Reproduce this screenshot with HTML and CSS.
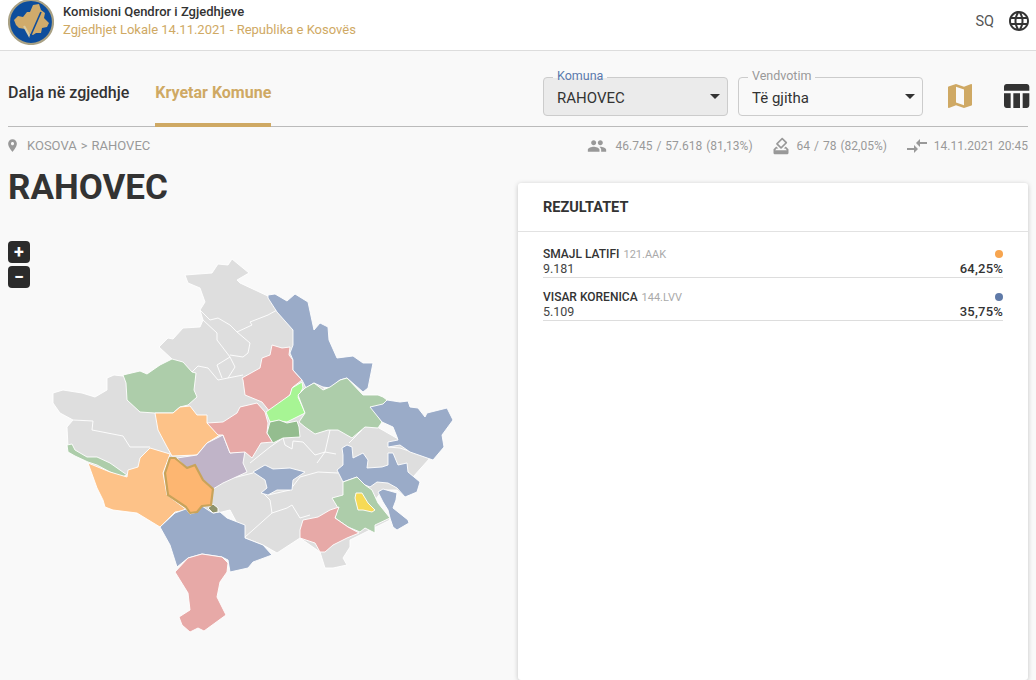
FILE: index.html
```html
<!DOCTYPE html>
<html lang="sq">
<head>
<meta charset="utf-8">
<title>Rahovec</title>
<link rel="stylesheet" href="styles.css">
</head>
<body>
<header class="topbar">
  <div class="brand">
    <svg class="logo" viewBox="0 0 46 46" aria-hidden="true">
      <circle cx="23" cy="23" r="22" fill="#0d4d9c" stroke="#a9a184" stroke-width="2.2"/>
      <path class="logo-land" d="M6 21 10 17 15 18 19 13 22 13 25 6 31 5 33 11 37 14 36 19 41 24 39 28 34 29 33 34 28 34 25 36 22 35 20 34 17 30 11 29 8 26Z"/>
      <path class="logo-tail" d="M16 27 22 38"/>
      <path class="logo-check" d="M22 38 33 13"/>
    </svg>
    <div class="brand-text">
      <div class="brand-title">Komisioni Qendror i Zgjedhjeve</div>
      <div class="brand-sub">Zgjedhjet Lokale 14.11.2021 - Republika e Kosovës</div>
    </div>
  </div>
  <div class="lang">
    <span>SQ</span>
    <svg class="globe" viewBox="0 0 24 24" aria-hidden="true"><path d="M11.99 2C6.47 2 2 6.48 2 12s4.47 10 9.99 10C17.52 22 22 17.52 22 12S17.52 2 11.99 2zm6.93 6h-2.95c-.32-1.25-.78-2.45-1.38-3.56 1.84.63 3.37 1.91 4.33 3.56zM12 4.04c.83 1.2 1.48 2.53 1.91 3.96h-3.82c.43-1.43 1.08-2.76 1.91-3.96zM4.26 14C4.1 13.36 4 12.69 4 12s.1-1.36.26-2h3.38c-.08.66-.14 1.32-.14 2 0 .68.06 1.34.14 2H4.26zm.82 2h2.95c.32 1.25.78 2.45 1.38 3.56-1.84-.63-3.37-1.9-4.33-3.56zm2.95-8H5.08c.96-1.66 2.49-2.93 4.33-3.56C8.81 5.55 8.35 6.75 8.03 8zM12 19.96c-.83-1.2-1.48-2.53-1.91-3.96h3.82c-.43 1.43-1.08 2.76-1.91 3.96zM14.34 14H9.66c-.09-.66-.16-1.32-.16-2 0-.68.07-1.35.16-2h4.68c.09.65.16 1.32.16 2 0 .68-.07 1.34-.16 2zm.25 5.56c.6-1.11 1.06-2.31 1.38-3.56h2.95c-.96 1.65-2.49 2.93-4.33 3.56zM16.36 14c.08-.66.14-1.32.14-2 0-.68-.06-1.34-.14-2h3.38c.16.64.26 1.31.26 2s-.1 1.36-.26 2h-3.38z"/></svg>
  </div>
</header>

<div class="page">
  <nav class="tabbar">
    <div class="tabs">
      <a class="tab">Dalja në zgjedhje</a>
      <a class="tab tab-active">Kryetar Komune</a>
    </div>
    <div class="controls">
      <div class="select select-filled">
        <span class="select-label label-blue">Komuna</span>
        <span class="select-value">RAHOVEC</span>
        <span class="caret"></span>
      </div>
      <div class="select">
        <span class="select-label">Vendvotim</span>
        <span class="select-value">Të gjitha</span>
        <span class="caret"></span>
      </div>
      <svg class="view-icon icon-map" viewBox="0 0 24 24" aria-hidden="true"><path d="M20.5 3l-.16.03L15 5.1 9 3 3.36 4.9c-.21.07-.36.25-.36.48V20.5c0 .28.22.5.5.5l.16-.03L9 18.9l6 2.1 5.64-1.9c.21-.07.36-.25.36-.48V3.5c0-.28-.22-.5-.5-.5zM15 19l-6-2.11V5l6 2.11V19z"/></svg>
      <svg class="view-icon icon-table" viewBox="0 0 24 24" aria-hidden="true"><path d="M10 10.02h5V21h-5zM17 21h3c1.1 0 2-.9 2-2v-9h-5v11zm3-18H5c-1.1 0-2 .9-2 2v3h19V5c0-1.1-.9-2-2-2zM3 19c0 1.1.9 2 2 2h3V10H3v9z"/></svg>
    </div>
  </nav>

  <div class="infobar">
    <div class="crumbs">
      <svg class="pin" viewBox="0 0 24 24" aria-hidden="true"><path d="M12 2C8.13 2 5 5.13 5 9c0 5.25 7 13 7 13s7-7.75 7-13c0-3.87-3.13-7-7-7zm0 9.5c-1.38 0-2.5-1.12-2.5-2.5s1.12-2.5 2.5-2.5 2.5 1.12 2.5 2.5-1.12 2.5-2.5 2.5z"/></svg>
      <span>KOSOVA</span><span class="sep">&gt;</span><span>RAHOVEC</span>
    </div>
    <div class="stats">
      <div class="stat">
        <svg class="stat-icon icon-people" viewBox="0 0 24 24" aria-hidden="true"><path d="M16 11c1.66 0 2.99-1.34 2.99-3S17.66 5 16 5c-1.66 0-3 1.34-3 3s1.34 3 3 3zm-8 0c1.66 0 2.99-1.34 2.99-3S9.66 5 8 5C6.34 5 5 6.34 5 8s1.34 3 3 3zm0 2c-2.33 0-7 1.17-7 3.5V19h14v-2.5c0-2.33-4.67-3.5-7-3.5zm8 0c-.29 0-.62.02-.97.05 1.16.84 1.97 1.97 1.97 3.45V19h6v-2.5c0-2.33-4.67-3.5-7-3.5z"/></svg>
        <span>46.745 / 57.618 (81,13%)</span>
      </div>
      <div class="stat">
        <svg class="stat-icon" viewBox="0 0 24 24" aria-hidden="true"><path d="M18 13h-.68l-2 2h1.91L19 17H5l1.78-2h2.05l-2-2H6l-3 3v4c0 1.1.89 2 1.99 2H19c1.1 0 2-.89 2-2v-4l-3-3zm-1-5.05l-4.95 4.95-3.54-3.54 4.95-4.95L17 7.95zm-4.24-5.66L6.39 8.66c-.39.39-.39 1.02 0 1.41l4.95 4.95c.39.39 1.02.39 1.41 0l6.36-6.36c.39-.39.39-1.02 0-1.41L14.16 2.3c-.38-.4-1.01-.4-1.4-.01z"/></svg>
        <span>64 / 78 (82,05%)</span>
      </div>
      <div class="stat">
        <svg class="stat-icon icon-arrows" viewBox="0 0 24 24" aria-hidden="true"><path d="M9.01 14H2v2h7.01v3L13 15l-3.99-4v3zm5.98-1v-3H22V8h-7.01V5L11 9l3.99 4z"/></svg>
        <span>14.11.2021 20:45</span>
      </div>
    </div>
  </div>

  <main class="content">
    <section class="map-col">
      <h1 class="place-title">RAHOVEC</h1>
      <div class="map-wrap">
        <div class="zoom-ctrl">
          <span class="zoom-btn">+</span>
          <span class="zoom-btn">−</span>
        </div>
        <svg class="map" viewBox="8 225 510 455" aria-label="Harta e Kosovës">
          <polygon class="r gray" points="185,275 212,273 218,264 228,265 232,259 249,273 237,280 240,283 270,297 300,340 330,400 400,440 430,458 413,477 420,482 417,492 405,497 397,490 383,490 375,500 390,520 350,540 350,547 343,558 347,565 333,568 325,568 320,552 300,538 277,553 263,545 245,538 230,510 160,527 137,513 113,510 105,507 88,463 80,458 68,447 67,427 73,420 60,413 53,403 53,393 63,390 82,393 95,397 107,390 107,378 114,375 123,376 147,374 172,359 159,347 168,338 173,339 183,328 200,327 203,320 200,310 205,302 200,288 188,283"/>
          <polyline class="line" points="200,310 210,320 218,318 230,325 237,332 252,325 250,322 268,315 277,310"/>
          <polyline class="line" points="203,320 217,333 217,340 230,357 217,365 222,378"/>
          <polyline class="line" points="237,332 250,343 248,353 243,357 230,355"/>
          <polyline class="line" points="192,372 198,366 208,368 218,380 228,378 243,375"/>
          <polyline class="line" points="230,357 235,367 228,378"/>
          <polyline class="line" points="73,420 93,421 92,430 123,436 130,447 150,447"/>
          <polyline class="line" points="283,438 285,445 292,449 293,441 303,442 315,455 325,452 336,454"/>
          <polyline class="line" points="330,430 325,452 317,463"/>
          <polyline class="line" points="349,443 362,430"/>
          <polyline class="line" points="250,463 270,447 283,438"/>
          <polyline class="line" points="268,495 290,490 300,477 318,472 338,473"/>
          <polyline class="line" points="213,489 218,480 237,477 253,473"/>
          <polyline class="line" points="262,492 270,500 272,513 253,530 245,537"/>
          <polyline class="line" points="272,513 287,508 292,505 300,518 310,515"/>
          <polyline class="line" points="388,447 400,448 430,458"/>

          <polygon class="r green" points="123,375 140,371 147,374 160,365 172,359 183,362 192,372 196,373 194,390 197,397 188,405 180,407 173,413 155,413 140,412 127,400 126,383"/>
          <polygon class="r green" points="67,445 72,444 75,450 87,457 97,457 110,463 127,475 122,477 110,472 97,465 88,462 75,456 68,452"/>
          <polygon class="r orange" points="155,413 173,413 180,407 190,406 197,415 207,415 207,423 220,435 207,443 197,455 172,456 167,447 158,430"/>
          <polygon class="r orange" points="150,448 170,454 163,473 167,495 187,510 175,512 160,527 137,513 113,510 105,507 103,500 97,488 88,463 110,472 127,477 128,470 138,467 140,458"/>
          <polygon class="r purple" points="177,458 197,455 207,443 223,435 230,453 245,451 243,463 247,472 223,483 213,489 203,480 195,465 187,468"/>
          <polygon class="r red" points="223,422 237,413 240,407 257,403 265,412 268,423 267,433 273,442 261,443 252,458 245,452 230,453 223,435 218,435 207,423"/>
          <polygon class="r red" points="272,345 282,348 290,347 289,355 293,360 293,370 302,380 293,387 290,395 270,412 262,402 245,395 243,380 242,378 260,368 262,358 270,355"/>
          <polygon class="r blue" points="268,295 275,294 287,301 295,294 308,302 314,330 320,323 328,327 329,340 337,358 353,356 363,363 373,363 368,388 363,392 347,378 340,380 330,388 323,387 314,383 306,388 302,380 293,370 293,360 290,353 293,345 293,330 277,312 268,298"/>
          <polygon class="r lime" points="302,382 303,388 298,397 303,408 305,413 295,418 287,422 278,421 270,422 266,412 290,395 292,388"/>
          <polygon class="r green" points="298,395 305,388 314,383 323,390 330,387 340,380 347,378 363,395 378,395 383,397 387,400 384,409 372,407 382,422 378,428 365,427 352,438 338,430 328,430 315,434 305,427 299,422 305,413 303,408"/>
          <polygon class="r darkgreen" points="270,422 279,420 287,423 297,421 299,427 300,437 283,438 273,443 267,433"/>
          <polygon class="r blue" points="370,407 383,404 387,400 400,402 408,401 410,407 418,408 425,417 427,413 447,408 453,420 442,435 444,447 433,460 410,452 400,445 388,447 388,442 398,440 397,437 393,427 382,422"/>
          <polygon class="r blue" points="342,448 347,445 352,447 353,458 363,453 368,460 367,468 382,467 388,465 388,453 393,453 398,465 407,463 408,472 420,482 417,492 405,497 397,488 388,483 377,482 370,487 365,485 357,477 343,482 337,470 343,465 343,455"/>
          <polygon class="r blue" points="378,492 383,489 397,493 396,500 393,508 408,520 409,523 397,530 393,527 390,518 388,510 383,502"/>
          <polygon class="r green" points="343,482 357,477 365,485 372,490 378,503 390,518 375,525 375,533 365,528 360,532 348,527 335,518 338,508 332,498 343,495"/>
          <polygon class="r yellow" points="356,493 362,493 365,498 368,503 375,510 372,512 363,510 358,510 355,498"/>
          <polygon class="r red" points="303,520 318,517 330,510 339,507 335,518 348,527 359,533 347,538 333,545 325,552 320,552 315,543 300,538 300,530"/>
          <polygon class="r blue" points="253,472 265,465 273,469 290,468 305,472 293,480 292,490 277,490 268,495 261,493 267,488 265,480"/>
          <polygon class="r blue" points="160,527 175,513 186,509 190,514 197,512 202,506 208,510 213,513 220,512 227,518 245,525 245,538 263,545 272,555 253,562 248,568 230,572 228,560 222,557 202,554 188,558 177,567 170,545"/>
          <polygon class="r red" points="175,572 188,558 202,554 222,557 228,563 227,572 220,582 217,597 222,607 226,615 204,631 198,628 190,632 182,625 179,617 190,610 188,593"/>
          <polygon class="r olive" points="208,508 213,504 218,508 218,512 213,513"/>
          <polygon class="rahovec" points="170,458 175,458 187,468 195,465 203,480 213,489 211,505 202,506 197,512 190,513 186,507 168,495 165,473"/>
        </svg>
      </div>
    </section>

    <section class="card">
      <h2 class="card-title">REZULTATET</h2>
      <div class="results">
        <div class="result">
          <div class="result-line">
            <div><span class="cand">SMAJL LATIFI</span> <span class="party">121.AAK</span></div>
            <span class="dot dot-orange"></span>
          </div>
          <div class="result-line">
            <span class="votes">9.181</span>
            <span class="pct">64,25%</span>
          </div>
        </div>
        <div class="result">
          <div class="result-line">
            <div><span class="cand">VISAR KORENICA</span> <span class="party">144.LVV</span></div>
            <span class="dot dot-blue"></span>
          </div>
          <div class="result-line">
            <span class="votes">5.109</span>
            <span class="pct">35,75%</span>
          </div>
        </div>
      </div>
    </section>
  </main>
</div>
</body>
</html>
```
FILE: styles.css
```css
* { box-sizing: border-box; }
html, body { margin: 0; height: 680px; overflow: hidden; }
body { background: #f9f9f9; color: #333; font-family: Roboto, "Liberation Sans", sans-serif; }

.topbar { height: 51px; background: #fff; border-bottom: 1px solid #ddd; display: flex; justify-content: space-between; align-items: center; padding: 0 5px 0 8px; }
.brand { display: flex; align-items: center; gap: 9px; margin-top: -7px; }
.logo { width: 46px; height: 46px; flex: none; }
.logo-land { fill: #d0ab6b; }
.logo-tail { fill: none; stroke: #d9cba3; stroke-width: 2.2; }
.logo-check { fill: none; stroke: #0d4d9c; stroke-width: 1.6; }
.brand-text { margin-top: -1px; }
.brand-title { font-size: 13px; font-weight: 500; line-height: 17px; color: #333; }
.brand-sub { font-size: 13px; line-height: 19px; color: #cfa964; }
.lang { display: flex; align-items: center; gap: 13px; font-size: 14.5px; color: #555; margin-bottom: 8px; }
.globe { width: 24px; height: 24px; fill: #333; }

.page { padding: 0 8px; }
.tabbar { height: 76px; border-bottom: 1px solid #bbb; display: flex; justify-content: space-between; align-items: stretch; }
.tabs { display: flex; gap: 26px; }
.tab { font-size: 16px; line-height: 18px; font-weight: 500; color: #333; padding-top: 33px; margin-bottom: -1px; }
.tab-active { font-weight: 700; color: #cfa964; border-bottom: 4px solid #cfa964; }
.controls { display: flex; align-items: center; padding-top: 15px; margin-right: -4px; }
.select { position: relative; width: 185px; height: 39px; border: 1px solid #ccc; border-radius: 4px; display: flex; align-items: center; padding: 3px 7px 0 13px; margin-right: 10px; color: #333; }
.select-filled { background: #ebebeb; }
.select-value { flex: 1; font-size: 15px; }
.select-label { position: absolute; left: 9px; top: -10px; padding: 0 4px; background: #f9f9f9; font-size: 12.5px; line-height: 15px; color: #999; height: 10px; }
.label-blue { color: #5a79ad; }
.caret { width: 0; height: 0; margin-bottom: 3px; border-left: 5px solid transparent; border-right: 5px solid transparent; border-top: 5px solid #333; }
.view-icon { width: 32px; height: 32px; flex: none; }
.icon-map { fill: #cfa964; margin-left: 11px; margin-right: 24px; }
.icon-table { fill: #333; }

.infobar { height: 37px; display: flex; justify-content: space-between; align-items: center; font-size: 13px; color: #999; }
.crumbs { display: flex; align-items: center; gap: 4px; }
.pin { width: 15px; height: 15px; fill: #999; margin-left: -3px; margin-right: 3px; }
.stats { display: flex; gap: 18px; font-size: 12px; }
.stat { display: flex; align-items: center; gap: 6px; word-spacing: 1px; }
.stat-icon { width: 20px; height: 20px; fill: #999; }
.icon-people { margin-right: 3px; }
.icon-arrows { width: 24px; height: 24px; margin-right: -1px; }

.content { display: flex; }
.map-col { width: 510px; flex: none; }
.place-title { margin: 4px 0 0; font-size: 35px; line-height: 40px; font-weight: 700; color: #333; height: 39px; }
.map-wrap { position: relative; padding-top: 18px; }
.zoom-ctrl { position: absolute; left: 0; top: 34px; display: flex; flex-direction: column; gap: 3px; }
.zoom-btn { width: 22px; height: 22px; border-radius: 4px; background: #2b2b2b; color: #fff; font-size: 18px; font-weight: 700; line-height: 22px; text-align: center; }
.map { display: block; width: 510px; height: 455px; }
.r { stroke: #fff; stroke-width: .9; stroke-linejoin: round; }
.line { fill: none; stroke: #fff; stroke-width: .9; stroke-linejoin: round; }
.gray { fill: #dedede; }
.green { fill: #adcdaa; }
.darkgreen { fill: #94bd8f; }
.lime { fill: #a7f594; }
.orange { fill: #fdc288; }
.purple { fill: #c0b4c8; }
.red { fill: #e7a9a7; }
.blue { fill: #9aabc8; }
.yellow { fill: #f6da55; }
.olive { fill: #8f936b; }
.rahovec { fill: #fdb671; stroke: #c8a35a; stroke-width: 2.2; stroke-linejoin: round; }

.card { width: 510px; height: 497px; background: #fff; border-radius: 3px; box-shadow: 0 1px 5px rgba(0,0,0,.22); margin-top: 19px; }
.card-title { margin: 0; height: 49px; border-bottom: 1px solid #e2e2e2; padding: 0 25px; font-size: 14.5px; font-weight: 700; line-height: 49px; color: #333; }
.results { padding: 13px 25px; }
.result { height: 43px; }
.result-line { display: flex; justify-content: space-between; align-items: center; height: 15px; }
.result-line + .result-line { border-bottom: 1px solid #ddd; height: 18px; }
.cand { font-size: 12px; font-weight: 500; color: #333; }
.party { font-size: 11px; color: #aaa; }
.votes { font-size: 12.5px; color: #444; }
.pct { font-size: 13px; font-weight: 500; color: #333; letter-spacing: .2px; }
.dot { width: 8px; height: 8px; border-radius: 50%; margin-top: 2px; }
.dot-orange { background: #f7a54f; }
.dot-blue { background: #5f7aa8; }
```
